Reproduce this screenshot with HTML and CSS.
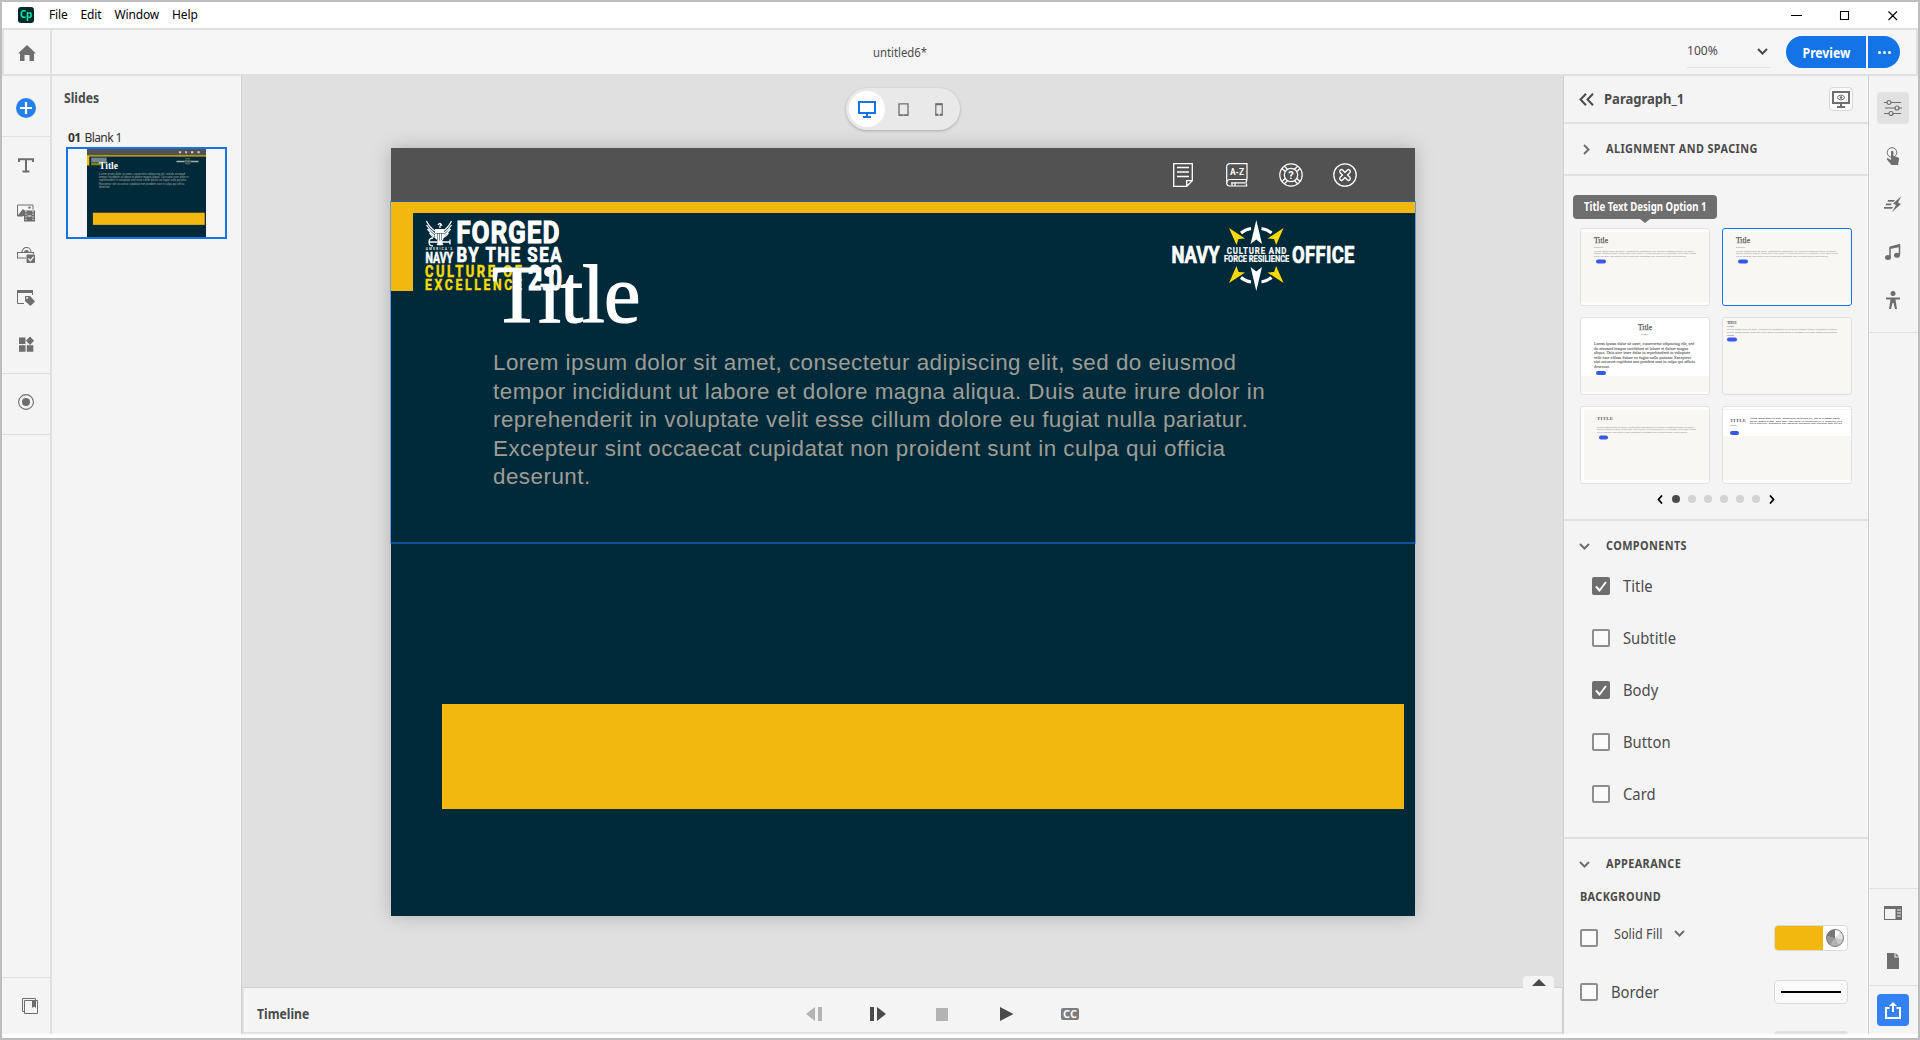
FILE: index.html
```html
<!DOCTYPE html>
<html lang="en">
<head>
<meta charset="utf-8">
<title>untitled6*</title>
<link rel="stylesheet" href="styles.css">
</head>
<body>
<div class="window">
  <header class="menubar">
    <div class="applogo">Cp</div>
    <nav class="menus"><span>File</span><span>Edit</span><span>Window</span><span>Help</span></nav>
    <svg class="wincontrols" width="108" height="26" viewBox="0 0 108 26"><path d="M1 13.500h11M50.500 9.500h8v8h-8zM98.500 9.500l8.500 8.500M107 9.500l-8.500 8.500" fill="none" stroke="#000" stroke-width="1.100"/></svg>
  </header>

  <div class="topbar">
    <div class="home"><svg width="18" height="16" viewBox="0 0 18 16"><path fill="#6e6e6e" d="M9 0l9 8.500h-2V16h-4.500v-6h-5v6H2V8.500H0z"/></svg></div>
    <div class="doctitle"><span class="nar">untitled6*</span></div>
    <div class="zoombox"><span class="nar">100%</span><svg width="11" height="7" viewBox="0 0 11 7"><path d="M1 1l4.500 4.500L10 1" fill="none" stroke="#4b4b4b" stroke-width="2"/></svg></div>
    <div class="preview"><button class="pv-main"><span class="nar">Preview</span></button><button class="pv-more"><i></i><i></i><i></i></button></div>
  </div>

  <div class="main">
    <aside class="rail">
      <div class="rsec r1"><svg width="20" height="20" viewBox="0 0 20 20"><circle cx="10" cy="10" r="10" fill="#2680eb"/><path d="M10 4v12M4 10h12" stroke="#fff" stroke-width="2.200"/></svg></div>
      <div class="rsec r2">
        <svg width="18" height="18" viewBox="0 0 18 18"><path d="M2 6V3.200h14V6M9 3v12M5.500 15.500h7" fill="none" stroke="#6e6e6e" stroke-width="2"/></svg>
        <svg width="18" height="18" viewBox="0 0 18 18"><path d="M16 5.500V1H.5v11H6" fill="none" stroke="#6e6e6e"/><path d="M1 11l5-6 3 3-2 3v1H1z" fill="#6e6e6e"/><circle cx="12.500" cy="3.600" r="1.200" fill="#6e6e6e"/><path d="M7 6.500h11v11H7z" fill="#6e6e6e"/><path d="M9 7v10M16 7v10" stroke="#f4f4f4" stroke-dasharray="1.300 1.300"/><path d="M10.500 12h4" stroke="#f4f4f4"/></svg>
        <svg width="18" height="18" viewBox="0 0 18 18"><path d="M5 7a4.500 4.500 0 019 0M9 13H.5V7.500h16V9" fill="none" stroke="#6e6e6e" stroke-width="1.100"/><path d="M7 7.500a2.500 2.500 0 015 0z" fill="#6e6e6e"/><rect x="9.500" y="9.500" width="8.500" height="8.500" rx="1" fill="#6e6e6e"/><path d="M11.500 13.500l2 2.200 3.200-4" fill="none" stroke="#f4f4f4" stroke-width="1.300"/></svg>
        <svg width="18" height="18" viewBox="0 0 18 18"><path d="M7 15.500H.5v-13h15V7" fill="none" stroke="#6e6e6e"/><path d="M0 2h16v3H0z" fill="#6e6e6e"/><path d="M8 8h5l5 5.500L13.500 18 8 13z" fill="#6e6e6e"/><circle cx="10" cy="10" r="1" fill="#f4f4f4"/></svg>
        <svg width="16" height="16" viewBox="0 0 16 16"><path fill="#6e6e6e" d="M1 1.500h6.500V8H1zM1 9.200h6.500v6.500H1zM8.800 9.200h6.500v6.500H8.800zM12 .5L16 4.700 12 9 8 4.700z"/></svg>
      </div>
      <div class="rsec r3"><svg width="16" height="16" viewBox="0 0 16 16"><circle cx="8" cy="8" r="7.400" fill="none" stroke="#6e6e6e" stroke-width="1.100"/><circle cx="8" cy="8" r="4" fill="#6e6e6e"/></svg></div>
      <div class="rsec r4"><svg width="16" height="16" viewBox="0 0 16 16"><path d="M2.500 13.500h-2V.5h13v2M2.500 2.500h13v13h-13z" fill="none" stroke="#6e6e6e"/><path fill="#6e6e6e" d="M10 3h4v7l-2-1.500L10 10z"/></svg></div>
    </aside>

    <aside class="slides">
      <h2><span class="nar">Slides</span></h2>
      <div class="slidename"><b>01</b><span>Blank 1</span></div>
      <div class="thumb">
        <svg width="119" height="88" viewBox="0 0 1024 768" preserveAspectRatio="none">
          <rect width="1024" height="768" fill="#002a3a"/><rect width="1024" height="54" fill="#525252"/>
          <path d="M790 20h20v18h-20zM845 20h16v18h-16zM895 20h20v18h-20zM950 20h20v18h-20z" fill="#ccc"/>
          <path d="M0 54h1024v11H20v80H0z" fill="#f2b80f"/><path d="M36 75h133v40H36z" fill="#6f8790"/><path d="M36 118h90v24H36z" fill="#8a8210"/>
          <path d="M770 102h70v14h-70zM892 102h68v14h-68z" fill="#a3b0b5"/><path d="M840 98h52v20h-52z" fill="#5f7078"/><path d="M845 82h42v8h-42zM845 126h42v8h-42z" fill="#8a8c5c"/>
          <text x="104" y="172" font-family="Liberation Serif,serif" font-size="82" font-weight="700" fill="#fff">Title</text>
          <g fill="#aeada5" font-family="Liberation Sans,sans-serif" font-size="23"><text x="104" y="225" textLength="740">Lorem ipsum dolor sit amet, consectetur adipiscing elit, sed do eiusmod</text><text x="104" y="253" textLength="770">tempor incididunt ut labore et dolore magna aliqua. Duis aute irure dolor in</text><text x="104" y="282" textLength="755">reprehenderit in voluptate velit esse cillum dolore eu fugiat nulla pariatur.</text><text x="104" y="310" textLength="733">Excepteur sint occaecat cupidatat non proident sunt in culpa qui officia</text><text x="104" y="338">deserunt.</text></g>
          <rect x="51" y="556" width="962" height="106" fill="#f2b80f"/>
        </svg>
      </div>
    </aside>

    <section class="center">
      <div class="stage">
        <div class="devices">
          <span class="dev on"><svg width="18" height="17" viewBox="0 0 18 17"><path d="M1 1h16v11H1zM5 16h8M9 12v4" fill="none" stroke="#1473e6" stroke-width="2"/></svg></span>
          <span class="dev"><svg width="11" height="13" viewBox="0 0 11 13"><path d="M1 .8h9v11.400H1z" fill="none" stroke="#6e6e6e" stroke-width="1.300"/><path d="M1 12.200h3.500M6.500 12.200H10" stroke="#6e6e6e" stroke-width="1.600"/></svg></span>
          <span class="dev"><svg width="8" height="13" viewBox="0 0 8 13"><path d="M.8 1h6.400v11H.8z" fill="none" stroke="#6e6e6e" stroke-width="1.200"/><path d="M.5 1.200h7M.5 11.800h2.500M5 11.800h2.500" stroke="#6e6e6e" stroke-width="2"/></svg></span>
        </div>
        <div class="slide">
          <div class="slidehead">
            <svg width="20" height="24" viewBox="0 0 20 24"><path d="M.7.7h18.600v17l-5.600 5.600H.7zM19 17.700h-5.300V23M4 4.500h12M4 9h12M4 13.500h12" fill="none" stroke="#fff" stroke-width="1.300"/></svg>
            <svg width="22" height="24" viewBox="0 0 22 24"><path d="M21 16.500V.7H4Q.7.700.7 4v16q0 3 3 3H21M21 16.500H4Q.9 16.500.9 20M21 16.500q-2 3.200 0 6.500M5 19.800h14M6 23v-3h3v3" fill="none" stroke="#fff" stroke-width="1.200"/><text x="4" y="12" font-family="Roboto,sans-serif" font-size="8.500" font-weight="700" fill="#fff" textLength="14" lengthAdjust="spacingAndGlyphs">A-Z</text></svg>
            <svg width="24" height="24" viewBox="0 0 24 24"><g fill="none" stroke="#fff" stroke-width="1.200"><circle cx="12" cy="12" r="11.200"/><circle cx="12" cy="12" r="6.700"/><path d="M5.300 3.200l3.200 3M3 5.500l3.200 3M18.700 3.200l-3.200 3M21 5.500l-3.200 3M5.300 20.800l3.200-3M3 18.500l3.200-3M18.700 20.800l-3.200-3M21 18.500l-3.200-3"/></g><text x="12" y="16" text-anchor="middle" font-family="Roboto,sans-serif" font-size="11" font-weight="700" fill="#fff">?</text></svg>
            <svg width="24" height="24" viewBox="0 0 24 24"><circle cx="12" cy="12" r="11.200" fill="none" stroke="#fff" stroke-width="1.300"/><path d="M8.500 8.500l7 7M15.500 8.500l-7 7" stroke="#fff" stroke-width="5" stroke-linecap="round"/><path d="M8.500 8.500l7 7M15.500 8.500l-7 7" stroke="#525252" stroke-width="2.400" stroke-linecap="round"/></svg>
          </div>
          <div class="goldtop"></div><div class="goldleft"></div>
          <svg class="logo-a" width="140" height="76" viewBox="0 0 140 76">
            <g fill="#fff" stroke="#fff">
              <g fill="none" stroke-width="1.300"><path d="M1.500 2q3 6.500 8.500 10M1.500 6q3 5 8.500 9M2.500 10q3 4 7 7M4.500 14q2 3 5 4.500M26.500 2q-3 6.500-8.500 10M26.500 6q-3 5-8.500 9M25.500 10q-3 4-7 7M23.500 14q-2 3-5 4.500"/><path d="M13 6q2-3 3.500 0-2 0-1.500 3M4.500 23h21M8 19q-4 0-4 4t4 4M25 20.500v5M12 20l6 6M18 20l-6 6"/></g>
              <path d="M10 10h9v9l-4.500 4L10 19z" stroke="none"/><path d="M10 14.500h9M12.500 14v7M14.500 14v8M16.500 14v7" stroke="#002a3a" stroke-width=".5"/>
              <circle cx="15" cy="24" r="2.500" stroke="none"/>
            </g>
            <g fill="#fff" stroke="#fff" font-family="Roboto,sans-serif" font-weight="700">
              <text x="1" y="31.300" font-size="2.800" stroke="none" textLength="26">AMERICA’S</text>
              <text x=".5" y="43.500" font-size="15" stroke-width=".6" textLength="27.500" lengthAdjust="spacingAndGlyphs">NAVY</text>
              <g transform="scale(.82 1)"><text x="38" y="23.800" font-size="32" stroke-width="1" textLength="126">FORGED</text>
              <text x="38.400" y="43.300" font-size="20.500" stroke-width=".7" textLength="128">BY THE SEA</text></g>
              <text x="103" y="71" font-size="35" stroke-width="1.200" textLength="34" lengthAdjust="spacingAndGlyphs">2.0</text>
            </g>
            <g fill="#f7da00" stroke="#f7da00" stroke-width=".5" font-family="Roboto,sans-serif" font-weight="700" transform="scale(.8 1)">
              <text x="0" y="57.600" font-size="16.200" textLength="121">CULTURE OF</text>
              <text x="0" y="70.800" font-size="15.200" textLength="121">EXCELLENCE</text>
            </g>
          </svg>
          <svg class="logo-b" width="186" height="74" viewBox="0 0 186 74">
            <path fill="#fff" d="M86.300 1l5.700 24-5.700-4.500L80.600 25zM86.300 72l5.700-24-5.700 4.500L80.600 48z"/>
            <path fill="#ffd900" d="M59 9l16 10.500-6.500.5L66.500 26zM113.600 9l-16 10.500 6.500.5 2 6zM59 64l16-10.500-6.500-.5-2-6zM113.600 64l-16-10.500 6.500-.5 2-6z"/>
            <path d="M71 14q4-3.500 10-4.500M101.500 14q-4-3.500-10-4.500M71 58.500q4 3.500 10 4.500M101.500 58.500q-4 3.500-10 4.500" fill="none" stroke="#fff" stroke-width="3"/>
            <g fill="#fff" stroke="#fff" stroke-width=".7" font-family="Roboto,sans-serif" font-weight="700">
              <g transform="scale(.8 1)"><text x="1.900" y="44.300" font-size="23" textLength="60">NAVY</text>
              <text x="152.500" y="44.300" font-size="23" textLength="78">OFFICE</text>
              <g stroke-width=".2"><text x="71" y="34.600" font-size="9.800" textLength="74.500">CULTURE AND</text>
              <text x="67.500" y="43.400" font-size="9" textLength="81.500" lengthAdjust="spacingAndGlyphs">FORCE RESILIENCE</text></g></g>
            </g>
          </svg>
          <div class="bigtitle">Title</div>
          <p class="lorem">Lorem ipsum dolor sit amet, consectetur adipiscing elit, sed do eiusmod<br>tempor incididunt ut labore et dolore magna aliqua. Duis aute irure dolor in<br>reprehenderit in voluptate velit esse cillum dolore eu fugiat nulla pariatur.<br>Excepteur sint occaecat cupidatat non proident sunt in culpa qui officia<br>deserunt.</p>
          <div class="goldbar"></div>
          <div class="selection"></div>
        </div>
      </div>
      <div class="timeline">
        <b class="nar">Timeline</b>
        <div class="tab"><svg width="14" height="7" viewBox="0 0 14 7"><path d="M0 7l7-7 7 7z" fill="#4b4b4b"/></svg></div>
        <svg class="transport" width="276" height="16" viewBox="0 0 276 16"><path fill="#b3b3b3" d="M0 8l9-7v14zM12 1h4v14h-4zM130 2h12v13h-12z"/><path fill="#4b4b4b" d="M64 1h4v14h-4zM71 1l9 7-9 7zM194 1l13.500 7-13.500 7z"/><rect x="255" y="2" width="18" height="12" rx="2" fill="#7d7d7d"/><text x="257" y="12" font-family="Open Sans,sans-serif" font-size="10.500" font-weight="700" fill="#fff" textLength="14" lengthAdjust="spacingAndGlyphs">CC</text></svg>
      </div>
    </section>

    <aside class="panel">
      <div class="phead">
        <svg width="15" height="13" viewBox="0 0 15 13"><path d="M7 .8L1.500 6.500 7 12.200M14 .8L8.500 6.500 14 12.200" fill="none" stroke="#4b4b4b" stroke-width="2"/></svg>
        <b class="nar">Paragraph_1</b>
        <span class="monbtn"><svg width="18" height="17" viewBox="0 0 18 17"><path d="M1 1h16v11H1zM5 16h8M9 12v4" fill="none" stroke="#6e6e6e" stroke-width="2"/><path d="M5 6.500q4-5 8 0-4 5-8 0z" fill="none" stroke="#6e6e6e"/><circle cx="9" cy="6.500" r="1.300" fill="#6e6e6e"/></svg></span>
      </div>
      <div class="palign"><svg width="7" height="11" viewBox="0 0 7 11"><path d="M1 1l4.500 4.500L1 10" fill="none" stroke="#6e6e6e" stroke-width="2"/></svg><b class="nar cap">ALIGNMENT AND SPACING</b></div>
      <div class="pgallery">
        <div class="tooltip"><b class="nar">Title Text Design Option 1</b></div>
        <div class="cards">
          <div class="card"><svg viewBox="0 0 128 76"><path fill="#f8f7f3" d="M0 3h128v70H0z"/><g class="tt"><text class="s" x="13" y="13.500" textLength="14">Title</text><text class="m" x="13" y="18.500" textLength="9">Subtitle</text><text class="m" x="13" y="22.500" textLength="100">Lorem ipsum dolor sit amet, consectetur adipiscing elit, sed do eiusmod tempor ut labore</text><text class="m" x="13" y="25.300" textLength="102">dolore magna aliqua. Duis aute irure dolor in reprehenderit in voluptate velit esse fugiat</text><text class="m" x="13" y="28" textLength="92">nulla pariatur. Excepteur sint occaecat cupidatat non proident sunt culpa officia</text></g><rect x="15" y="30.500" width="10" height="4" rx="2" fill="#3858e9"/></svg></div>
          <div class="card sel"><svg viewBox="0 0 128 76"><path fill="#f8f7f3" d="M0 3h128v70H0z"/><g class="tt"><text class="s" x="13" y="13.500" textLength="14">Title</text><text class="m" x="13" y="18.500" textLength="9">Subtitle</text><text class="m" x="13" y="22.500" textLength="100">Lorem ipsum dolor sit amet, consectetur adipiscing elit, sed do eiusmod tempor ut labore</text><text class="m" x="13" y="25.300" textLength="102">dolore magna aliqua. Duis aute irure dolor in reprehenderit in voluptate velit esse fugiat</text><text class="m" x="13" y="28" textLength="92">nulla pariatur. Excepteur sint occaecat cupidatat non proident sunt culpa officia</text></g><rect x="15" y="30.500" width="10" height="4" rx="2" fill="#3858e9"/></svg></div>
          <div class="card"><svg viewBox="0 0 128 76"><path fill="#f8f7f3" d="M0 58h128v16H0z"/><g class="tt"><text class="s" x="57" y="11.500" textLength="14">Title</text><text class="m" x="60" y="16.500" textLength="8">Subtitle</text><g class="b"><text x="13" y="27" textLength="100">Lorem ipsum dolor sit amet, consectetur adipiscing elit, sed</text><text x="13" y="31.500" textLength="94">do eiusmod tempor incididunt ut labore et dolore magna</text><text x="13" y="36" textLength="96">aliqua. Duis aute irure dolor in reprehenderit in voluptate</text><text x="13" y="40.500" textLength="97">velit esse cillum dolore eu fugiat nulla pariatur. Excepteur</text><text x="13" y="45" textLength="101">sint occaecat cupidatat non proident sunt in culpa qui officia</text><text x="13" y="49.500" textLength="16">deserunt.</text></g></g><rect x="15" y="53" width="10" height="4" rx="2" fill="#3858e9"/></svg></div>
          <div class="card cream"><svg viewBox="0 0 128 76"><path fill="#f8f7f3" d="M0 0h128v74H0z"/><g class="tt"><text class="c c-small" x="4" y="5.800" textLength="10">TITLE</text><text class="m" x="4" y="9.300" textLength="7">Subtitle</text><text class="m" x="4" y="12.200" textLength="110">Lorem ipsum dolor sit amet, consectetur adipiscing elit, sed do eiusmod tempor incididunt ut labore</text><text class="m" x="4" y="14.800" textLength="110">dolore magna aliqua. Duis aute irure dolor in reprehenderit in voluptate velit esse fugiat nulla pariatur</text><text class="m" x="4" y="17.500" textLength="7">deserunt.</text></g><rect x="4" y="19.500" width="10" height="4" rx="2" fill="#3858e9"/></svg></div>
          <div class="card"><svg viewBox="0 0 128 76"><path fill="#f8f7f3" d="M3 3h125v70H3z"/><g class="tt"><text class="c" x="16" y="13" textLength="16">TITLE</text><text class="m" x="16" y="20.500" textLength="97">Lorem ipsum dolor sit amet, consectetur adipiscing elit, sed do eiusmod tempor ut labore</text><text class="m" x="16" y="23.300" textLength="99">dolore magna aliqua. Duis aute irure dolor in reprehenderit in voluptate velit esse fugiat</text><text class="m" x="16" y="26" textLength="90">nulla pariatur. Excepteur sint occaecat cupidatat non proident sunt culpa officia</text></g><rect x="18" y="28.500" width="9" height="4" rx="2" fill="#3858e9"/></svg></div>
          <div class="card"><svg viewBox="0 0 128 76"><path fill="#f3f3f1" d="M0 2h128v1H0z"/><path fill="#f8f7f3" d="M0 29h128v44H0z"/><g class="tt"><text class="c" x="7" y="14.500" textLength="16">TITLE</text><text class="m" x="7" y="18.500" textLength="7">Subtitle</text><g class="b b-small"><text x="27" y="12.200" textLength="90">Lorem ipsum dolor sit amet, consectetur adipiscing elit, sed do eiusmod tempor</text><text x="27" y="14.500" textLength="92">dolore magna aliqua. Duis aute irure dolor in reprehenderit in voluptate velit</text><text x="27" y="16.800" textLength="92">nulla pariatur. Excepteur sint occaecat cupidatat non proident sunt officia</text></g></g><rect x="7" y="24" width="9" height="4" rx="2" fill="#3858e9"/></svg></div>
        </div>
        <div class="pager"><svg width="6" height="9" viewBox="0 0 6 9"><path d="M5 .5L1.500 4.500 5 8.500" fill="none" stroke="#000" stroke-width="1.800"/></svg><i class="cur"></i><i></i><i></i><i></i><i></i><i></i><svg width="6" height="9" viewBox="0 0 6 9"><path d="M1 .5l3.500 4L1 8.500" fill="none" stroke="#000" stroke-width="1.800"/></svg></div>
      </div>
      <div class="pcomp">
        <div class="sechead"><svg width="11" height="7" viewBox="0 0 11 7"><path d="M1 1l4.500 4.500L10 1" fill="none" stroke="#6e6e6e" stroke-width="2"/></svg><b class="nar cap">COMPONENTS</b></div>
        <div class="chk"><span class="box on"><svg width="12" height="11" viewBox="0 0 12 11"><path d="M1 5.500l3.500 4L11 1" fill="none" stroke="#fff" stroke-width="1.900"/></svg></span><span class="nar">Title</span></div>
        <div class="chk"><span class="box"></span><span class="nar">Subtitle</span></div>
        <div class="chk"><span class="box on"><svg width="12" height="11" viewBox="0 0 12 11"><path d="M1 5.500l3.500 4L11 1" fill="none" stroke="#fff" stroke-width="1.900"/></svg></span><span class="nar">Body</span></div>
        <div class="chk"><span class="box"></span><span class="nar">Button</span></div>
        <div class="chk"><span class="box"></span><span class="nar">Card</span></div>
      </div>
      <div class="pappear">
        <div class="sechead"><svg width="11" height="7" viewBox="0 0 11 7"><path d="M1 1l4.500 4.500L10 1" fill="none" stroke="#6e6e6e" stroke-width="2"/></svg><b class="nar cap">APPEARANCE</b></div>
        <div class="bgh"><b class="nar cap">BACKGROUND</b></div>
        <div class="arow fill"><span class="box"></span><span class="nar flabel">Solid Fill</span><svg class="fchev" width="11" height="7" viewBox="0 0 11 7"><path d="M1 1l4.500 4.500L10 1" fill="none" stroke="#6e6e6e" stroke-width="2"/></svg><span class="swatch"><i></i><em></em></span></div>
        <div class="arow bord"><span class="box"></span><span class="nar">Border</span><span class="linebox"><i></i></span></div>
        <div class="nextbox"></div>
      </div>
    </aside>

    <aside class="tools">
      <div class="ttop">
        <span class="tile"><svg width="18" height="18" viewBox="0 0 18 18"><g stroke="#6e6e6e" stroke-width="1.200"><path d="M0 3.500h17M1 9h17M0 14.500h17"/><g fill="#e1e1e1"><circle cx="5" cy="3.500" r="2"/><circle cx="13" cy="9" r="2"/><circle cx="7" cy="14.500" r="2"/></g></g></svg></span>
        <svg width="18" height="18" viewBox="0 0 18 18"><circle cx="8" cy="5.500" r="4.800" fill="none" stroke="#6e6e6e"/><path fill="#6e6e6e" d="M7 4.500q1.200-1.300 2.400 0V9l5 1.500q1 .5.600 2L14 18H7.500L2.500 12l1.200-1L7 13z"/></svg>
        <svg width="18" height="18" viewBox="0 0 18 18"><path fill="#6e6e6e" d="M17.500 1L9 8.500l3 1.500L8 17l9-8-3-1.500zM4 5h7l-1.500 1.800H3.500zM2 8.500h5.500L7 10.300H1.500zM0 12h9l-1.200 1.800H0z"/></svg>
        <svg width="18" height="18" viewBox="0 0 18 18"><path d="M6 13.500V4.500L15.500 2v9.500" fill="none" stroke="#6e6e6e" stroke-width="1.500"/><path d="M6 3.500l10-2.500v3L6 6z" fill="#6e6e6e"/><ellipse cx="4" cy="14.500" rx="3" ry="2.500" fill="#6e6e6e"/><ellipse cx="13" cy="12.300" rx="3" ry="2.500" fill="#6e6e6e"/></svg>
        <svg width="18" height="18" viewBox="0 0 18 18"><circle cx="9" cy="2.500" r="2.500" fill="#6e6e6e"/><path fill="#6e6e6e" d="M2 6.500h14v2h-4.500L13 18h-2l-1.500-6h-1L7 18H5L6.500 8.500H2z"/></svg>
      </div>
      <div class="tbot">
        <svg width="18" height="14" viewBox="0 0 18 14"><path fill="#6e6e6e" d="M0 0h18v14H0z"/><path fill="#f4f4f4" d="M1 3h10.500v10H1zM13 3.500h4v1h-4zM13 6.500h4v1h-4zM13 9.500h4v1h-4z"/></svg>
        <svg width="12" height="16" viewBox="0 0 12 16"><path fill="#6e6e6e" d="M0 0h7.500v4.500H12V16H0zM8.500 0L12 3.500H8.500z"/></svg>
      </div>
      <div class="tshare"><span class="sharebtn"><svg width="16" height="17" viewBox="0 0 16 17"><path d="M4.500 6H1v10h14V6h-3.500" fill="none" stroke="#fff" stroke-width="2"/><path d="M8 10V3" stroke="#fff" stroke-width="2"/><path d="M8 0l4 4H4z" fill="#fff"/></svg></span></div>
    </aside>
  </div>
</div>
</body>
</html>
```
FILE: styles.css
```css
* { box-sizing: border-box; }
body { margin: 0; font-family: "Noto Sans", "Open Sans", sans-serif; color: #4b4b4b; }
svg { display: block; flex: none; }
.window { width: 1920px; height: 1040px; border: 2px solid #bdbdbd; background: #fff; display: flex; flex-direction: column; overflow: hidden; }
.nar { display: inline-block; transform: scaleX(.87); transform-origin: 0 50%; white-space: nowrap; }
.cap { letter-spacing: .45px; }

.menubar { height: 26px; display: flex; align-items: center; padding-left: 16px; flex: none; }
.applogo { width: 16px; height: 16px; border-radius: 3px; background: #00292c; color: #00e4a8; font: 700 10px/15px "Open Sans", sans-serif; text-align: center; letter-spacing: -.3px; }
.menus { display: flex; gap: 13px; margin: 0 0 2px 15px; color: #000; font-size: 12px; letter-spacing: -.15px; }
.wincontrols { margin-left: auto; margin-right: 20px; }

.topbar { height: 48px; border: 2px solid #e0e0e0; background: #f5f5f5; display: flex; align-items: center; flex: none; }
.home { width: 48px; height: 44px; border-right: 2px solid #e0e0e0; padding-left: 14px; display: flex; align-items: center; }
.home svg { margin-top: 2px; }
.doctitle { margin-left: 821px; width: 814px; font-size: 13px; }
.zoombox { width: 83px; height: 31px; border-bottom: 1px solid #e0e0e0; display: flex; justify-content: space-between; align-items: center; font-size: 13px; padding-right: 2px; }
.zoombox .nar { transform: scaleX(.93); margin-top: -3px; }
.preview { display: flex; gap: 2px; margin-left: 16px; }
.preview button { border: 0; background: #1473e6; color: #fff; height: 32px; padding: 0; font: 700 14px "Noto Sans", sans-serif; }
.pv-main { width: 80px; border-radius: 16px 0 0 16px; }
.pv-main .nar { transform-origin: 50% 50%; margin-top: -2px; }
.pv-more { width: 32px; border-radius: 0 16px 16px 0; display: flex; justify-content: center; align-items: center; gap: 2px; }
.pv-more i { width: 3px; height: 3px; border-radius: 50%; background: #fff; }

.main { height: 958px; display: flex; flex: none; background: #f4f4f4; }
.rail { width: 50px; border-right: 2px solid #e0e0e0; display: flex; flex-direction: column; }
.rsec { display: flex; flex-direction: column; align-items: center; border-bottom: 1px solid #e0e0e0; }
.r1 { height: 61px; padding-top: 22px; }
.r2 { height: 237px; padding-top: 19px; }
.r2 svg { margin-bottom: 27px; }
.r2 svg:nth-child(1) { margin-bottom: 30px; }
.r2 svg:nth-child(2) { margin-bottom: 23px; }
.r2 svg:nth-child(3) { margin-bottom: 25px; }
.r2 svg:nth-child(4) { margin-bottom: 30px; }
.r3 { height: 61px; padding-top: 20px; }
.r4 { margin-top: auto; height: 57px; border-top: 1px solid #e0e0e0; border-bottom: 0; padding: 20px 0 0 8px; }

.slides { width: 190px; border-right: 1px solid #d0d0d0; padding: 12px 0 0 12px; }
.slides h2 { margin: 0; font-size: 14px; line-height: 20px; }
.slidename { display: flex; gap: 4px; font-size: 12px; line-height: 16px; margin: 22px 0 1px 4px; letter-spacing: -.6px; color: #323232; }
.thumb { width: 161px; height: 92px; border: 2px solid #1473e6; margin-left: 2px; padding-left: 19px; background: #f5f5f5; }

.center { width: 1321px; display: flex; flex-direction: column; }
.stage { height: 911px; background: #e0e0e0; padding-top: 12px; display: flex; flex-direction: column; align-items: center; }
.devices { width: 114px; height: 42px; margin-left: 1px; border-radius: 21px; background: #e9e9e9; box-shadow: 0 1px 3px rgba(0,0,0,.25); display: flex; padding: 3px; }
.dev { width: 36px; height: 36px; flex: none; border-radius: 50%; display: flex; align-items: center; justify-content: center; }
.dev.on { background: #fff; }
.slide { position: relative; width: 1024px; height: 768px; margin: 18px 0 0 1px; background: #002a3a; box-shadow: 0 0 18px rgba(0,0,0,.22); }
.slidehead { height: 54px; background: #525252; display: flex; align-items: center; justify-content: flex-end; gap: 30px; padding-right: 58px; }
.slidehead svg:nth-child(1) { margin-right: 3px; }
.slidehead svg:nth-child(2) { margin-right: 1px; }
.goldtop { height: 11px; background: #f2b80f; }
.goldleft { width: 22px; height: 78px; background: #f2b80f; }
.logo-a { position: absolute; left: 34px; top: 71px; }
.logo-b { position: absolute; left: 779px; top: 71px; }
.bigtitle { position: absolute; left: 101px; top: 101px; font: 82px/92px "Liberation Serif", serif; letter-spacing: -.9px; color: #fff; -webkit-text-stroke: 1.200px #fff; }
.lorem { position: absolute; left: 102px; top: 201px; margin: 0; color: #9e9d95; font: 22.400px/28.500px "Liberation Sans", sans-serif; letter-spacing: .48px; white-space: nowrap; }
.goldbar { position: absolute; left: 51px; top: 556px; width: 962px; height: 105px; background: #f2b80f; }
.selection { position: absolute; left: -1px; top: 53px; width: 1026px; height: 343px; border: 2px solid rgba(20,115,230,.55); border-width: 1px 1px 2px; }

.timeline { height: 47px; border: 1px solid #d0d0d0; border-left: 2px solid #e0e0e0; border-bottom: 2px solid #e0e0e0; position: relative; display: flex; align-items: center; padding: 7px 0 0 13px; font-size: 14px; }
.timeline b { width: 60px; }
.transport { margin-left: 489px; }
.tab { position: absolute; right: 8px; top: -12px; width: 31px; height: 12px; background: #f4f4f4; border-radius: 4px 4px 0 0; display: flex; align-items: center; justify-content: center; }

.panel { width: 306px; border-left: 1px solid #d0d0d0; border-right: 1px solid #d0d0d0; overflow: hidden; }
.phead { height: 48px; border-bottom: 2px solid #e0e0e0; display: flex; align-items: center; padding: 0 15px 0 15px; font-size: 14px; }
.phead .nar { margin: -2px 0 0 10px; transform: scaleX(.93); }
.monbtn { width: 24px; height: 24px; border: 1px solid #d8d8d8; border-radius: 4px; background: #fafafa; margin-left: auto; display: flex; align-items: center; justify-content: center; }
.palign { height: 52px; border-bottom: 2px solid #e0e0e0; display: flex; align-items: center; padding-left: 19px; font-size: 12.500px; }
.palign b { margin: -1px 0 0 16px; }
.pgallery { height: 345px; border-bottom: 2px solid #e0e0e0; padding: 52px 0 0 16px; position: relative; }
.tooltip { position: absolute; left: 9px; top: 19px; width: 144px; height: 24px; border-radius: 4px; background: #6e6e6e; color: #fff; font-size: 12px; line-height: 24px; padding-left: 11px; white-space: nowrap; }
.tooltip .nar { transform: scaleX(.8); }
.tooltip::after { content: ""; position: absolute; left: 67px; top: 24px; border: 5px solid transparent; border-top: 4px solid #6e6e6e; border-bottom: 0; }
.cards { display: grid; grid-template-columns: 130px 130px; gap: 11px 12px; }
.card { height: 78px; border: 1px solid #e0e0e0; border-radius: 3px; background: #fff; overflow: hidden; }
.card.sel { border-color: #1473e6; }
.cream { background: #f4f4f4; }
.tt { fill: #666; }
.s { font: 7.500px "Liberation Serif", serif; stroke: #555; stroke-width: .25px; }
.c { font: 700 5px "Liberation Serif", serif; }
.c-small { font-size: 4px; }
.m { font: 2.300px "Liberation Sans", sans-serif; fill: #777; }
.b { font: 4px "Liberation Serif", serif; stroke: #555; stroke-width: .1px; }
.b-small { font-size: 2.300px; }
.pager { display: flex; align-items: center; height: 8px; margin: 11px 0 0 77px; gap: 8px; }
.pager i { width: 8px; height: 8px; border-radius: 50%; background: #d3d3d3; }
.pager i.cur { background: #4b4b4b; margin-left: 1px; }
.pager i:nth-last-child(2) { margin-right: 1px; }
.pcomp { height: 318px; border-bottom: 2px solid #e0e0e0; padding-top: 12px; }
.pcomp .sechead { margin-bottom: 1px; }
.sechead { height: 26px; display: flex; align-items: center; padding-left: 15px; font-size: 12.500px; }
.sechead b { margin: -1px 0 0 16px; }
.chk { height: 52px; display: flex; align-items: center; gap: 13px; padding-left: 28px; font-size: 17px; }
.chk .nar { margin-top: -2px; }
.box { width: 18px; height: 18px; border: 2px solid #8e8e8e; border-radius: 2px; background: #fafafa; flex: none; display: flex; align-items: center; justify-content: center; }
.box.on { background: #6e6e6e; border-color: #6e6e6e; }
.pappear { padding-top: 12px; }
.bgh { padding-left: 16px; font-size: 12.500px; height: 40px; line-height: 40px; }
.arow { display: flex; align-items: center; padding: 0 20px 0 16px; }
.fill { height: 42px; font-size: 14.500px; }
.flabel { margin: -10px 0 0 16px; width: 60px; }
.fchev { margin-top: -10px; }
.swatch { margin-left: auto; width: 74px; height: 26px; border: 1px solid #dadada; border-radius: 4px; background: #fff; display: flex; overflow: hidden; align-items: center; }
.swatch i { width: 48px; height: 24px; background: #f2b80f; }
.swatch em { width: 18px; height: 18px; margin-left: 3px; border-radius: 50%; border: 1px solid #777; background: conic-gradient(#fff 12%, #e3e3e3 12% 28%, #c9c9c9 28% 42%, #b3b3b3 42% 60%, #999 60% 80%, #777 80%); }
.bord { height: 24px; margin-top: 21px; font-size: 17px; gap: 13px; }
.bord .nar { margin-top: -2px; }
.linebox { margin-left: auto; width: 74px; height: 24px; border: 1px solid #dadada; border-radius: 4px; background: #fafafa; display: flex; align-items: center; justify-content: center; }
.linebox i { width: 60px; height: 2px; background: #000; }
.nextbox { width: 74px; height: 10px; margin: 27px 0 0 210px; background: #e0e0e0; border-radius: 4px; }

.tools { width: 49px; display: flex; flex-direction: column; }
.ttop { height: 257px; border-bottom: 1px solid #e0e0e0; padding: 16px 1px 0 0; display: flex; flex-direction: column; align-items: center; gap: 30px; }
.tile { width: 32px; height: 32px; border-radius: 4px; background: #e1e1e1; display: flex; align-items: center; justify-content: center; margin-bottom: -7px; }
.tbot { margin-top: auto; height: 97px; border-top: 1px solid #e0e0e0; display: flex; flex-direction: column; align-items: center; gap: 33px; padding: 17px 1px 0 0; }
.tshare { height: 49px; border-top: 1px solid #e0e0e0; display: flex; justify-content: center; padding: 8px 1px 0 0; }
.sharebtn { width: 32px; height: 32px; border-radius: 4px; background: #3381f3; display: flex; align-items: center; justify-content: center; }
```
